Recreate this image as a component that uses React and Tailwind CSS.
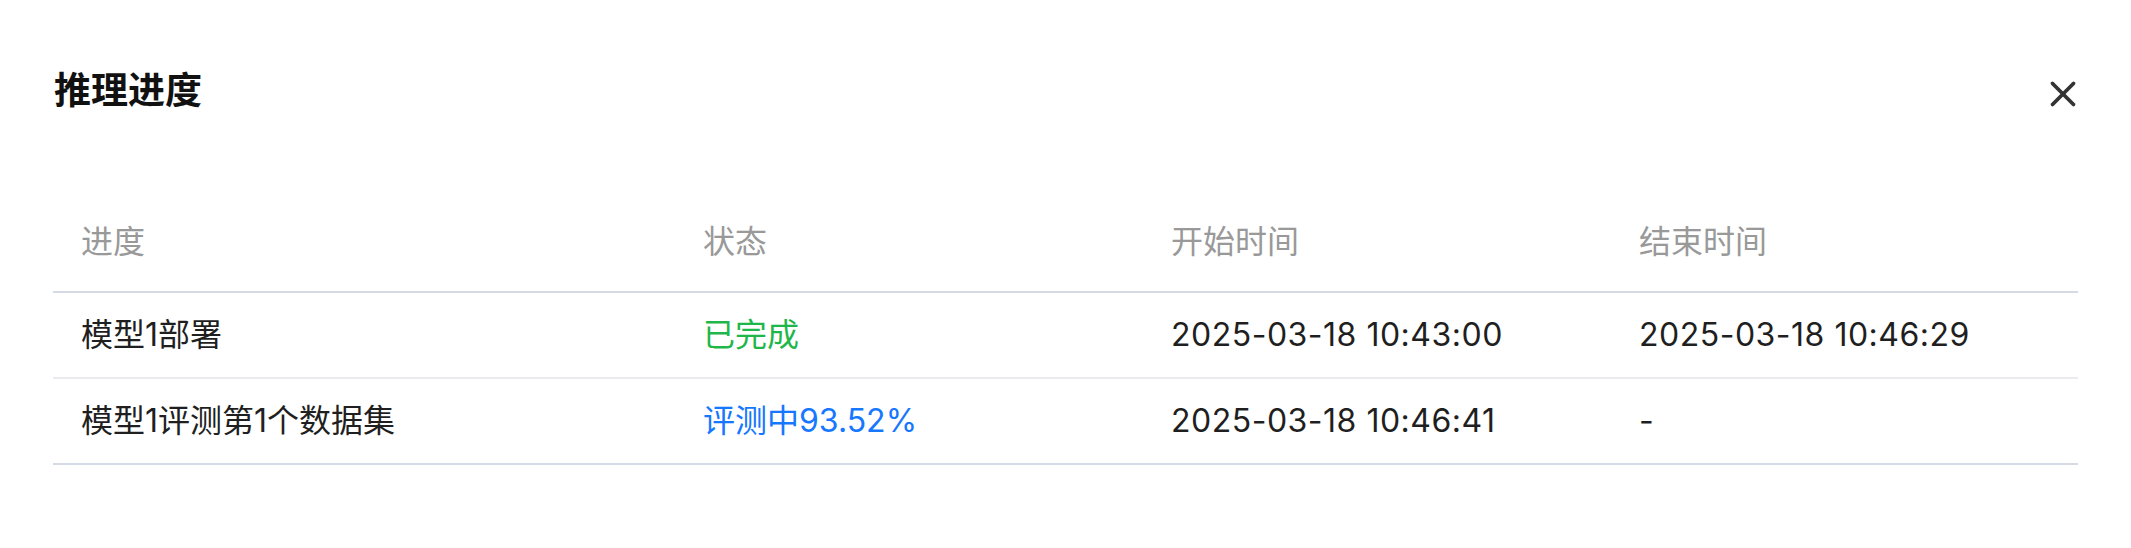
import { X } from 'lucide-react'

const rows = [
  { name: '模型1部署', status: '已完成', statusColor: 'text-[#1fb64a]', start: '2025-03-18 10:43:00', end: '2025-03-18 10:46:29', line: 'border-[#e9ebf0]' },
  { name: '模型1评测第1个数据集', status: '评测中93.52%', statusColor: 'text-[#1677ff]', start: '2025-03-18 10:46:41', end: '-', line: 'border-[#d6dae4]' },
]

export default function App() {
  return (
    <div className="w-[2131px] h-[548px] bg-white px-[53px] font-['Inter','Noto_Sans_CJK_SC',sans-serif]">
      {/* Header */}
      <div className="flex items-center justify-between pt-[69px] h-[113px]">
        <h1 className="pl-[1px] text-[37px] leading-[44px] font-bold text-[#111]">推理进度</h1>
        <button className="-mr-[6px] mt-[6px] text-[#333]">
          <X size={42} strokeWidth={2.1} />
        </button>
      </div>

      {/* Table */}
      <div className="mt-[80px] text-[32px]">
        <div className="grid grid-cols-[621px_468px_468px_1fr] h-[100px] items-center border-b-2 border-[#d6dae4] text-[#999]">
          <div className="pl-[28px]">进度</div>
          <div className="pl-[29px]">状态</div>
          <div className="pl-[29px]">开始时间</div>
          <div className="pl-[29px]">结束时间</div>
        </div>
        {rows.map((r, i) => (
          <div
            key={i}
            className={`grid grid-cols-[621px_468px_468px_1fr] h-[86px] items-center border-b-2 ${r.line} text-[#1f1f1f]`}
          >
            <div className="pl-[28px]">{r.name}</div>
            <div className={`pl-[29px] ${r.statusColor}`}>{r.status}</div>
            <div className="pl-[29px] tracking-[0.5px]">{r.start}</div>
            <div className="pl-[29px] tracking-[0.5px]">{r.end}</div>
          </div>
        ))}
      </div>
    </div>
  )
}
